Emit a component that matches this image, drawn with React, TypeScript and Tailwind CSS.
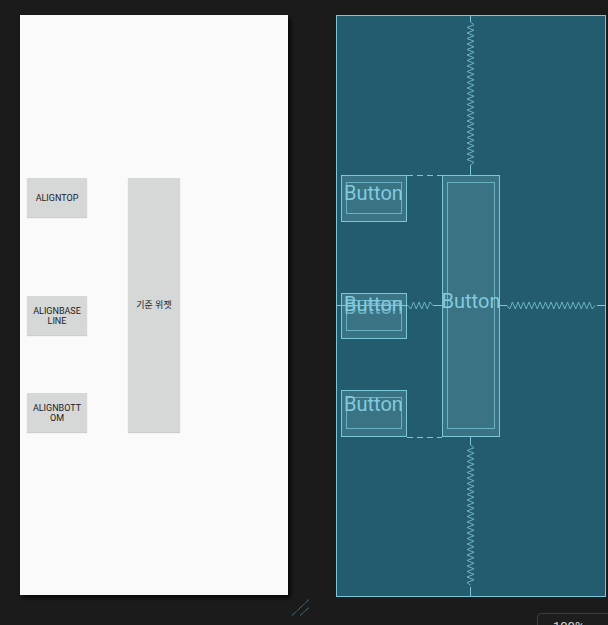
import React from "react";

const LINE = "#7cc6da";
const ZIG = "#6cb2c5";

// zigzag path along one axis, amplitude around the centre line
function zigzag(
  x: number,
  y: number,
  length: number,
  axis: "x" | "y",
  amp = 3.3,
  step = 2.75,
) {
  const pts: string[] = [`M${x} ${y}`];
  const n = Math.floor(length / step);
  for (let i = 1; i <= n; i++) {
    const off = i === n ? 0 : i % 2 ? amp : -amp;
    if (axis === "y") pts.push(`L${x + off} ${y + i * step}`);
    else pts.push(`L${x + i * step} ${y + off}`);
  }
  return pts.join(" ");
}

function PhoneButton({
  children,
  className,
}: {
  children: React.ReactNode;
  className?: string;
}) {
  return (
    <div
      className={`flex items-center justify-center bg-[#d6d7d7] text-center text-[9px] leading-[10px] text-[#222] shadow-[0_1px_1px_rgba(0,0,0,0.18)] ${className ?? ""}`}
    >
      {children}
    </div>
  );
}

function BlueBox({
  className,
  textClass,
  double,
}: {
  className: string;
  textClass: string;
  double?: boolean;
}) {
  return (
    <div
      className={`relative border border-[#7cc6da] bg-[#3a7384] ${className}`}
    >
      <div className="absolute top-[6px] right-[4px] bottom-[7px] left-[4px] border border-[#6bb0c3]" />
      <div
        className={`relative text-[20px] leading-[20px] whitespace-nowrap text-[#82cbdf] ${textClass}`}
      >
        Button
      </div>
      {double ? (
        <div className="absolute top-[3px] left-[2px] text-[20px] leading-[20px] whitespace-nowrap text-[#82cbdf]/70">
          Button
        </div>
      ) : undefined}
    </div>
  );
}

export default function App() {
  return (
    <div
      className="relative h-[625px] w-[608px] overflow-hidden bg-[#1b1b1b]"
      style={{ fontFamily: "Roboto, 'Noto Sans CJK KR', sans-serif" }}
    >
      <div className="flex items-start pt-[15px] pl-[20px]">
        {/* design preview */}
        <div className="flex h-[580px] w-[268px] items-start bg-[#fafafa] pt-[163px] pl-[7px] shadow-[3px_3px_4px_rgba(0,0,0,0.7)]">
          <div className="flex w-[60px] flex-col">
            <PhoneButton className="h-[39px]">ALIGNTOP</PhoneButton>
            <PhoneButton className="mt-[79px] h-[39px]">
              ALIGNBASE
              <br />
              LINE
            </PhoneButton>
            <PhoneButton className="mt-[58px] h-[39px]">
              ALIGNBOTT
              <br />
              OM
            </PhoneButton>
          </div>
          <PhoneButton className="ml-[41px] h-[254px] w-[52px]">
            기준 위젯
          </PhoneButton>
        </div>

        {/* blueprint */}
        <div className="relative ml-[48px] h-[582px] w-[270px] border border-[#7cc6da] bg-[#235c6e]">
          <div className="flex items-start pt-[159px] pl-[4px]">
            <div className="flex w-[66px] flex-col">
              <BlueBox className="h-[47px]" textClass="pt-[7px] pl-[2px]" />
              <BlueBox
                className="mt-[71px] h-[46px]"
                textClass="pt-0 pl-[2px]"
                double
              />
              <BlueBox
                className="mt-[51px] h-[47px]"
                textClass="pt-[3px] pl-[2px]"
              />
            </div>
            <BlueBox
              className="ml-[35px] flex h-[262px] w-[58px] justify-center"
              textClass="pt-[115px]"
            />
          </div>

          <svg
            className="pointer-events-none absolute inset-0"
            width="268"
            height="580"
            viewBox="0 0 268 580"
            fill="none"
          >
            {/* vertical constraints */}
            <path d="M133.5 0 V6" stroke={LINE} />
            <path d={zigzag(133.5, 6, 143, "y", 3.5)} stroke={ZIG} />
            <path d="M133.5 149 V159" stroke={LINE} />
            <path d="M133.5 421 V429" stroke={LINE} />
            <path d={zigzag(133.5, 429, 142, "y", 3.5)} stroke={ZIG} />
            <path d="M133.5 571 V580" stroke={LINE} />
            {/* baseline constraints */}
            <path d="M0 289.5 H71" stroke={LINE} />
            <path d={zigzag(71, 289.5, 25, "x", 3.5)} stroke={ZIG} />
            <path d="M96 289.5 H105" stroke={LINE} />
            <path d="M163 289.5 H170" stroke={LINE} />
            <path d={zigzag(170, 289.5, 90, "x", 3.5)} stroke={ZIG} />
            <path d="M260 289.5 H268" stroke={LINE} />
            {/* aligned edges */}
            <path d="M70 159.5 H105" stroke={LINE} strokeDasharray="6 4" />
            <path d="M70 421.5 H105" stroke={LINE} strokeDasharray="6 4" />
          </svg>
        </div>
      </div>

      {/* resize handle */}
      <svg
        className="absolute top-[598px] left-[290px]"
        width="22"
        height="20"
        viewBox="0 0 22 20"
      >
        <path
          d="M2 17.5 L19 1.5 M10 17.5 L19 9.5"
          stroke="#2a9fd8"
          strokeWidth="1"
          strokeDasharray="1 0.6"
        />
      </svg>

      {/* zoom indicator */}
      <div className="absolute top-[613px] left-[537px] h-[28px] w-[74px] rounded-[4px] border border-[#3e3e3e] bg-[#1d1d1d] pt-[3px] pl-[15px] text-[13px] text-[#d8d8d8]">
        100%
      </div>
    </div>
  );
}
